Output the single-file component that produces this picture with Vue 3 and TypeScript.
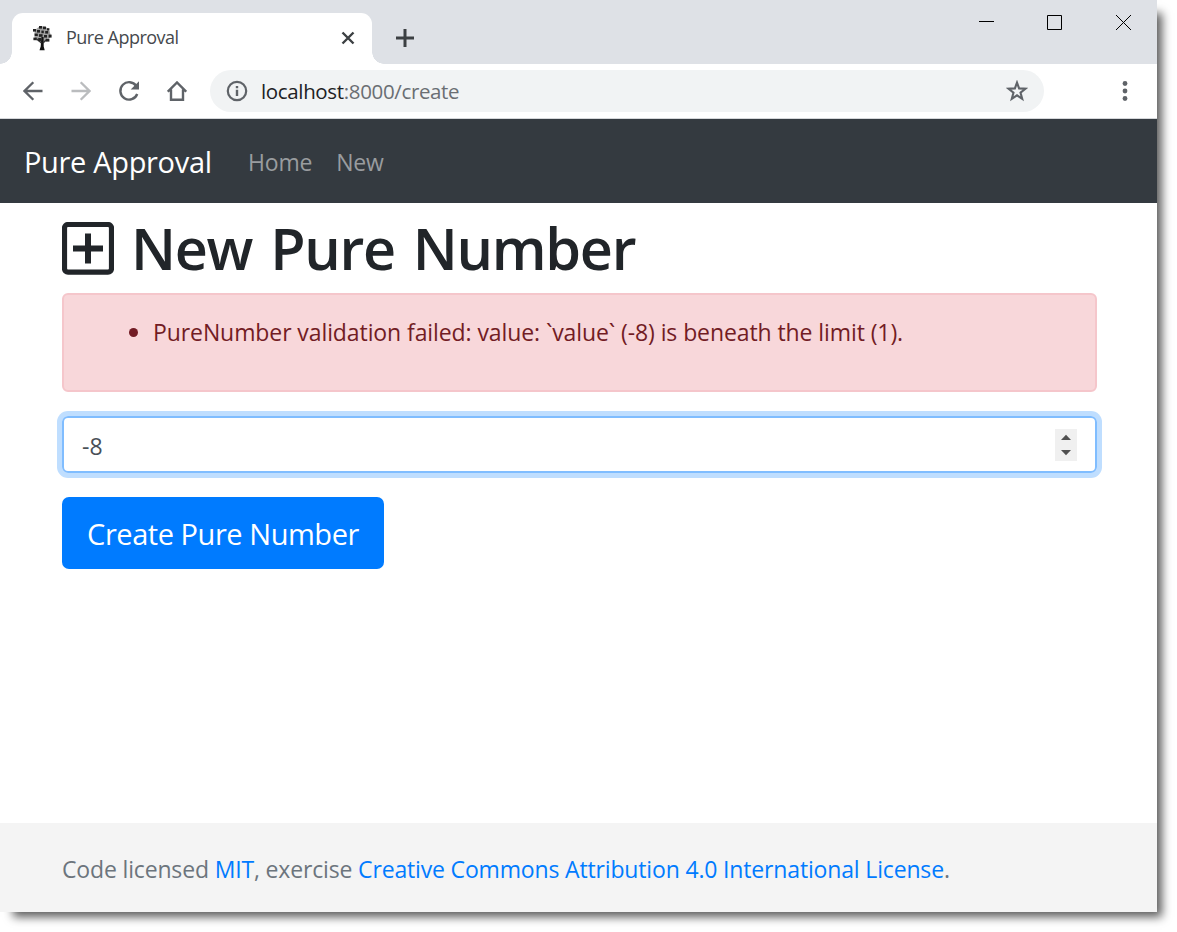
<script setup lang="ts">
import { ref } from 'vue'

const value = ref<number>(-8)
const errors = ref<string[]>([
  'PureNumber validation failed: value: `value` (-8) is beneath the limit (1).',
])

function step(delta: number): void {
  value.value += delta
}
</script>

<template>
  <div class="window">
    <header class="tabs">
      <div class="tab">
        <svg class="favicon" width="20" height="26" viewBox="0 0 20 26">
          <g fill="#a0a0a0">
            <circle cx="10.3" cy="9.5" r="8.2" />
          </g>
          <path d="M9.4 12h2.2l.1 9.5 1 3.8H7.5l1.2-3.8z" fill="#111" />
          <path d="M5 14l4.4 4M15 14l-4 4" stroke="#333" stroke-width="1.3" />
          <g fill="#222">
            <rect x="7" y="1" width="3" height="2.6" /><rect x="11" y="1.6" width="3" height="2.6" />
            <rect x="1" y="4" width="3" height="2.6" /><rect x="5" y="5" width="3" height="2.6" />
            <rect x="9.4" y="5.6" width="2.4" height="2.6" /><rect x="13.2" y="6" width="3" height="2.6" />
            <rect x="2.8" y="8.6" width="3" height="2.4" /><rect x="7" y="9.2" width="3.6" height="2.6" />
            <rect x="12" y="10" width="3" height="2.6" /><rect x="16.6" y="9.6" width="3" height="3" />
            <rect x="1.4" y="12.6" width="3.4" height="2.6" /><rect x="6.2" y="13" width="3" height="3" />
            <rect x="14" y="14" width="3.4" height="2.6" /><rect x="15" y="3.2" width="2.4" height="2.2" />
          </g>
        </svg>
        <span class="tab-title">Pure Approval</span>
        <svg class="tab-close" width="14" height="14" viewBox="0 0 14 14">
          <path d="M1.5 1.5l11 11M12.5 1.5l-11 11" stroke="#3c4043" stroke-width="2.4" />
        </svg>
      </div>
      <svg class="new-tab" width="18" height="18" viewBox="0 0 18 18">
        <path d="M9 0v18M0 9h18" stroke="#3c4043" stroke-width="3" />
      </svg>
      <div class="controls">
        <svg width="15" height="15" viewBox="0 0 15 15"><path d="M0 6.5h15" stroke="#000" /></svg>
        <svg width="15" height="15" viewBox="0 0 15 15"><path d="M.5.5h14v14H.5z" fill="none" stroke="#000" /></svg>
        <svg width="15" height="15" viewBox="0 0 15 15"><path d="M0 0l15 15M15 0L0 15" stroke="#000" /></svg>
      </div>
    </header>

    <div class="toolbar">
      <nav class="nav-icons">
        <svg width="20" height="20" viewBox="0 0 20 20"><path d="M19.5 10H2M10.3 1.2L1.5 10l8.8 8.8" fill="none" stroke="#5f6368" stroke-width="2.3" /></svg>
        <svg width="20" height="20" viewBox="0 0 20 20"><path d="M.5 10H18M9.7 1.2l8.8 8.8-8.8 8.8" fill="none" stroke="#babcbe" stroke-width="2.3" /></svg>
        <svg width="22" height="22" viewBox="0 0 22 22">
          <path d="M18.3 6A8.7 8.7 0 1 0 19.2 14" fill="none" stroke="#5f6368" stroke-width="2.4" />
          <path d="M21 1.2v8.3h-8.3z" fill="#5f6368" />
        </svg>
        <svg width="20" height="20" viewBox="0 0 20 20">
          <path d="M.8 10.7L10 1.5l9.2 9.2M4 8.5v10.2h12V8.5" fill="none" stroke="#5f6368" stroke-width="2.4" />
        </svg>
      </nav>
      <div class="omnibox">
        <svg width="22" height="22" viewBox="0 0 22 22">
          <circle cx="11" cy="11" r="9.2" fill="none" stroke="#5f6368" stroke-width="2.2" />
          <path d="M9.8 9.8h2.4V16H9.8zM9.8 6h2.4v2.3H9.8z" fill="#5f6368" />
        </svg>
        <span class="url"><span class="host">localhost</span>:8000/create</span>
        <svg class="star" width="22" height="22" viewBox="0 0 22 22">
          <path d="M11 2.6l2.1 5.8 6.3.3-4.9 3.9 1.7 6.2-5.2-3.5-5.2 3.5 1.7-6.2-4.9-3.9 6.3-.3z" fill="none" stroke="#5f6368" stroke-width="2.1" />
        </svg>
      </div>
      <svg class="menu" width="6" height="20" viewBox="0 0 6 20" fill="#5f6368">
        <circle cx="3" cy="2.5" r="2.4" /><circle cx="3" cy="10" r="2.4" /><circle cx="3" cy="17.5" r="2.4" />
      </svg>
    </div>

    <nav class="navbar">
      <a class="brand">Pure Approval</a>
      <a class="link home">Home</a>
      <a class="link new">New</a>
    </nav>

    <main class="content">
      <h1>
        <svg width="52" height="53" viewBox="0 0 52 53">
          <rect x="2.5" y="2.5" width="47" height="47.6" rx="3.5" fill="none" stroke="#212529" stroke-width="5.2" />
          <path d="M26 11.5v30M11 26.5h30" stroke="#212529" stroke-width="6" />
        </svg>
        <span>New Pure Number</span>
      </h1>
      <div class="alert">
        <ul>
          <li v-for="error in errors" :key="error">{{ error }}</li>
        </ul>
      </div>
      <div class="field">
        <input v-model.number="value" type="text" inputmode="numeric" />
        <div class="spinner">
          <svg width="22" height="16" viewBox="0 0 22 16" @click="step(1)"><path d="M6 11l5-5.2L16 11z" fill="#505050" /></svg>
          <svg width="22" height="16" viewBox="0 0 22 16" @click="step(-1)"><path d="M6 5l5 5.2L16 5z" fill="#505050" /></svg>
        </div>
      </div>
      <button type="button">Create Pure Number</button>
    </main>

    <footer>
      <p>Code licensed <a>MIT</a>, exercise <a>Creative Commons Attribution 4.0 International License</a>.</p>
    </footer>
  </div>
</template>

<style>
body {
  margin: 0;
  background: #fff;
}
#app {
  height: 932px;
}
</style>

<style scoped>
.window {
  width: 1157px;
  height: 912px;
  display: flex;
  flex-direction: column;
  background: #fff;
  box-shadow: 9px 9px 9px -4px rgba(0, 0, 0, 0.64);
  font-family: 'Open Sans', 'Noto Sans', sans-serif;
  font-size: 23px;
  color: #212529;
}
.window * {
  box-sizing: border-box;
}
svg {
  display: block;
  flex: none;
}
.tabs {
  height: 64px;
  flex: none;
  display: flex;
  background: #dee1e6;
}
.tab {
  position: relative;
  width: 360px;
  height: 51px;
  margin: 13px 0 0 12px;
  padding: 0 17px 2px 20px;
  display: flex;
  align-items: center;
  background: #fff;
  border-radius: 11px 11px 0 0;
}
.tab::before,
.tab::after {
  content: '';
  position: absolute;
  bottom: 0;
  width: 12px;
  height: 12px;
}
.tab::before {
  left: -12px;
  background: radial-gradient(circle at 0 0, transparent 11.5px, #fff 12px);
}
.tab::after {
  right: -12px;
  background: radial-gradient(circle at 100% 0, transparent 11.5px, #fff 12px);
}
.tab-title {
  margin: -1px 0 0 14px;
  font-size: 18px;
  line-height: 24px;
  letter-spacing: -0.5px;
  color: #45494d;
}
.tab-close {
  margin-left: auto;
}
.new-tab {
  margin: 29px 0 0 24px;
}
.controls {
  display: flex;
  gap: 54px;
  margin: 15px 26px 0 auto;
}
.controls svg:first-child {
  margin-right: -1px;
}
.toolbar {
  height: 55px;
  flex: none;
  display: flex;
  align-items: center;
  border-bottom: 1px solid #d5d7da;
}
.nav-icons {
  display: flex;
  align-items: center;
  gap: 27px;
  width: 164px;
  margin-left: 23px;
  padding-bottom: 1px;
}
.nav-icons svg:nth-child(2) {
  margin-left: 1px;
}
.omnibox {
  width: 834px;
  height: 42px;
  margin-left: 23px;
  padding: 0 16px;
  display: flex;
  align-items: center;
  background: #f1f3f4;
  border-radius: 21px;
}
.url {
  margin-left: 13px;
  font-size: 20.5px;
  letter-spacing: -0.35px;
  line-height: 28px;
  color: #6a6e73;
}
.host {
  color: #202124;
}
.star {
  margin-left: auto;
}
.menu {
  margin-left: 78px;
}
.navbar {
  height: 84px;
  flex: none;
  display: flex;
  align-items: center;
  padding: 2px 24px 0;
  background: #343a40;
}
.brand {
  width: 224px;
  padding-bottom: 2px;
  font-size: 29px;
  letter-spacing: -0.33px;
  color: #fff;
  white-space: nowrap;
}
.link {
  letter-spacing: -0.2px;
  color: #999c9f;
}
.new {
  margin-left: 24px;
}
.content {
  flex: 1;
  padding: 0 60px 0 62px;
}
h1 {
  height: 90px;
  margin: 0;
  display: flex;
  align-items: center;
  font-size: 57.5px;
  font-weight: 600;
  line-height: 72px;
  letter-spacing: -1.3px;
  word-spacing: 4.4px;
  white-space: nowrap;
}
h1 span {
  margin-left: 17px;
  padding-bottom: 1px;
}
.alert {
  height: 99px;
  padding: 19px 28px;
  color: #721c24;
  background: #f8d7da;
  border: 2px solid #f5c6cb;
  border-radius: 6px;
}
ul {
  margin: 0;
  padding-left: 61px;
  line-height: 36px;
  list-style: none;
}
li {
  display: flex;
  align-items: center;
  letter-spacing: -0.09px;
  white-space: nowrap;
}
li::before {
  content: '';
  width: 9px;
  height: 9px;
  margin: 0 15px 0 -24px;
  border-radius: 50%;
  background: #721c24;
}
.field {
  height: 57px;
  margin: 24px 0;
  padding: 0 18px;
  display: flex;
  align-items: center;
  border: 2px solid #80bdff;
  border-radius: 6px;
  box-shadow: 0 0 0 5px #bfdeff;
}
input {
  flex: 1;
  height: 36px;
  padding: 2px 0 0;
  border: 0;
  outline: 0;
  font: inherit;
  color: #495057;
  background: transparent;
}
.spinner {
  background: #f0f0f0;
}
button {
  width: 322px;
  height: 72px;
  padding: 0;
  border: 0;
  border-radius: 7px;
  font: inherit;
  font-size: 29px;
  letter-spacing: -0.45px;
  white-space: nowrap;
  color: #fff;
  background: #007bff;
}
footer {
  height: 89px;
  flex: none;
  padding: 28px 62px 0;
  background: #f4f4f4;
  color: #6c757d;
}
footer p {
  margin: 0;
  line-height: 36px;
  letter-spacing: -0.16px;
  white-space: nowrap;
}
footer a {
  color: #007bff;
}
</style>
